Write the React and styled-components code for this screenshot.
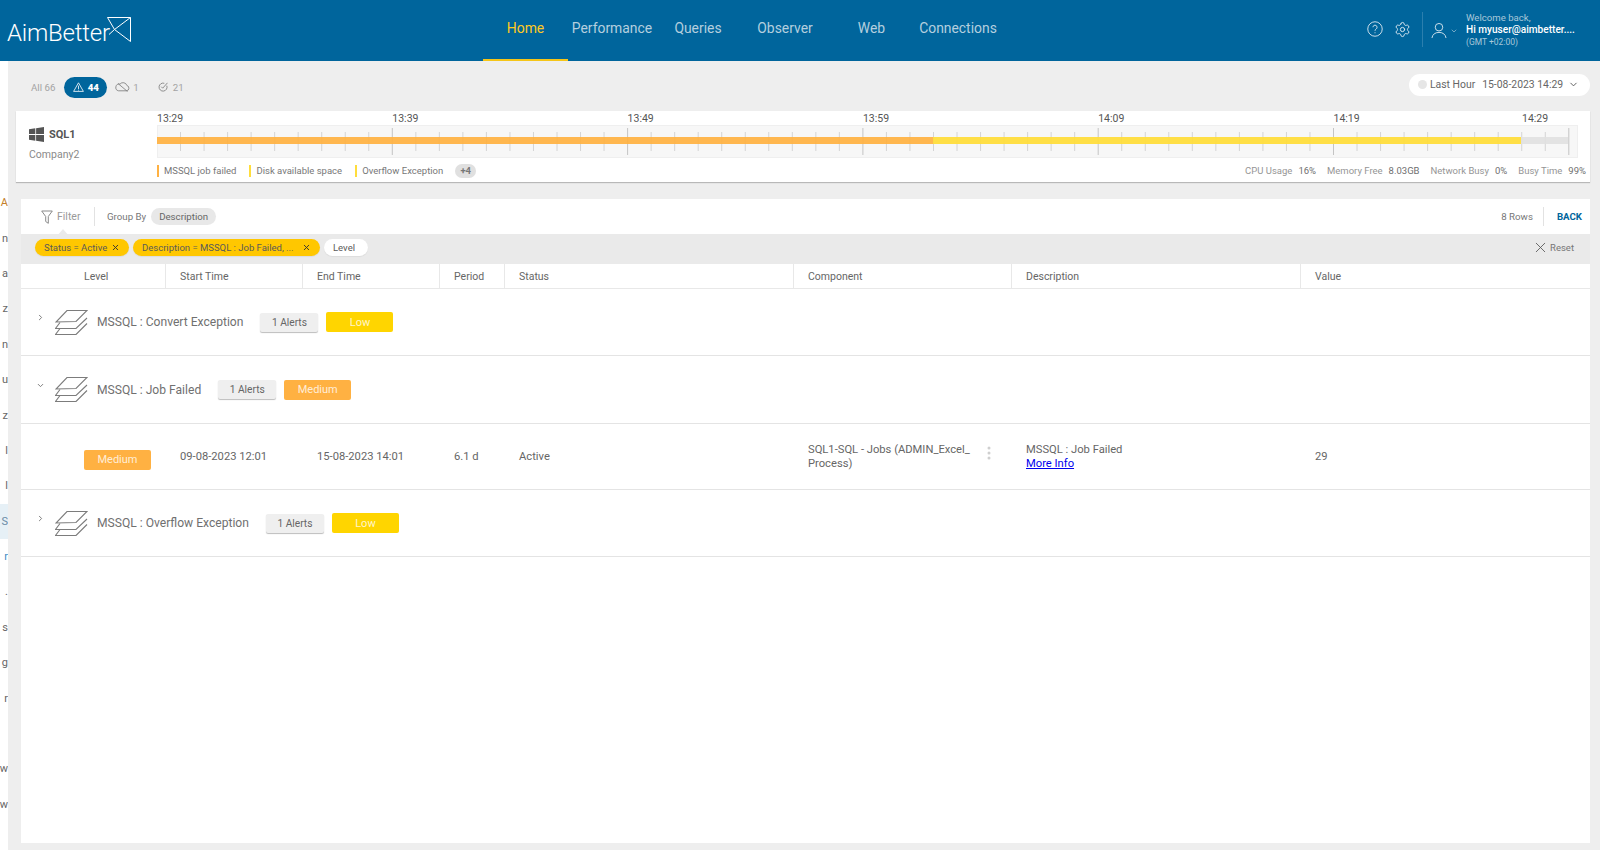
import React from 'react';
import styled, { createGlobalStyle } from 'styled-components';
import { ChevronDown, ChevronRight, Settings, X } from 'lucide-react';

const GlobalStyle = createGlobalStyle`
  html, body {
    margin: 0;
    padding: 0;
    height: 100%;
    background: #eeeeee;
    font-family: Roboto, "Liberation Sans", sans-serif;
  }
  * { box-sizing: border-box; }
`;

const Page = styled.div`
  width: 1600px;
  height: 850px;
  overflow: hidden;
  display: flex;
  flex-direction: column;
`;

const Header = styled.header`
  height: 61px;
  flex: none;
  background: #00659c;
  display: flex;
  align-items: stretch;
  color: #fff;
`;

const Logo = styled.div`
  width: 483px;
  padding: 17px 0 0 7px;
  display: flex;
  align-items: flex-start;
  font-size: 24px;
  font-weight: 300;
  letter-spacing: -0.2px;
  span { margin-top: 2px; line-height: 28px; }
  svg { margin-left: -3px; }
`;

const Nav = styled.nav`
  display: flex;
  flex: 1;
`;

const NavItem = styled.a`
  height: 61px;
  width: ${p => p.$w}px;
  display: flex;
  align-items: center;
  justify-content: center;
  padding-bottom: 4px;
  font-size: 13.9px;
  font-weight: 400;
  color: ${p => (p.$active ? '#ffc91f' : '#b4cfdf')};
  border-bottom: 2px solid ${p => (p.$active ? '#f5c518' : 'transparent')};
`;

const HeaderRight = styled.div`
  display: flex;
  align-items: center;
  width: 233px;
`;

const HeaderIcons = styled.div`
  display: flex;
  align-items: center;
  gap: 11px;
  width: 55px;
  padding-bottom: 3px;
`;

const VLine = styled.div`
  width: 1px;
  height: 35px;
  margin: 0 8px 2px 0;
  background: #2b7fae;
`;

const UserBox = styled.div`
  display: flex;
  align-items: center;
  gap: 3px;
  width: 35px;
`;

const Welcome = styled.div`
  display: flex;
  flex-direction: column;
  white-space: nowrap;
  line-height: 12px;
  margin-top: -1px;
`;

const WelcomeSmall = styled.span`
  font-size: ${p => p.$size}px;
  color: #a9c8da;
`;

const WelcomeName = styled.span`
  font-size: 10.1px;
  font-weight: 500;
  color: #fff;
`;

const Body = styled.div`
  flex: 1;
  display: flex;
  min-height: 0;
`;

const SideStrip = styled.aside`
  width: 8px;
  flex: none;
  background: #fff;
  overflow: hidden;
  display: flex;
  flex-direction: column;
  padding-top: 124px;
`;

const SideItem = styled.div`
  height: 35.4px;
  flex: none;
  display: flex;
  align-items: center;
  justify-content: flex-end;
  font-size: 11px;
  white-space: nowrap;
  color: ${p => p.$color || '#666'};
  background: ${p => p.$bg || 'transparent'};
`;

const Main = styled.main`
  flex: 1;
  min-width: 0;
  padding: 0 10px 7px 8px;
  display: flex;
  flex-direction: column;
`;

const TopBar = styled.div`
  height: 50px;
  flex: none;
  display: flex;
  align-items: center;
  justify-content: space-between;
  padding: 2px 0 0 15px;
`;

const Counters = styled.div`
  display: flex;
  align-items: center;
  font-size: 9.7px;
  color: #a3a3a3;
`;

const Counter = styled.div`
  display: flex;
  align-items: center;
  gap: ${p => p.$gap || 3}px;
  margin-right: ${p => p.$mr || 0}px;
`;

const ActiveCounter = styled.div`
  width: 43px;
  height: 21px;
  border-radius: 11px;
  background: #00659c;
  color: #fff;
  font-weight: 900;
  display: flex;
  align-items: center;
  justify-content: center;
  gap: 4px;
  margin-right: 8px;
`;

const DatePill = styled.div`
  width: 181px;
  height: 22px;
  margin-top: -5px;
  border-radius: 11px;
  background: #fff;
  display: flex;
  align-items: center;
  padding-left: 9px;
  font-size: 10.4px;
  color: #666;
  white-space: nowrap;
`;

const DateDot = styled.i`
  width: 9px;
  height: 9px;
  border-radius: 50%;
  background: #e6e6e6;
  margin-right: 3px;
`;

const DateValue = styled.span`
  margin-left: 7px;
  margin-right: 5px;
`;

const ServerCard = styled.section`
  height: 71px;
  flex: none;
  background: #fff;
  box-shadow: 0 1px 1px #b8b8b8;
  display: flex;
`;

const ServerInfo = styled.div`
  width: 141px;
  flex: none;
  padding: 16px 0 0 13px;
`;

const ServerName = styled.div`
  display: flex;
  align-items: center;
  gap: 5px;
  font-size: 11px;
  font-weight: 700;
  color: #555;
`;

const Company = styled.div`
  margin-top: 6px;
  font-size: 10.5px;
  color: #8a8a8a;
`;

const TimelineCol = styled.div`
  flex: 1;
  min-width: 0;
  padding-right: 12px;
`;

const TimeLabels = styled.div`
  height: 14px;
  display: flex;
  align-items: center;
  font-size: 10.5px;
  color: #555;
`;

const TimeLabel = styled.span`
  width: ${p => p.$w || 235.3}px;
  flex: none;
`;

const Legend = styled.div`
  display: flex;
  justify-content: space-between;
  align-items: center;
  height: 15px;
  margin-top: 5px;
  font-size: 9.5px;
  color: #777;
`;

const LegendLeft = styled.div`
  display: flex;
  align-items: center;
`;

const LegendItem = styled.span`
  border-left: 2px solid ${p => p.$color};
  padding-left: 5px;
  margin-right: 13px;
  line-height: 12px;
`;

const MoreBadge = styled.span`
  width: 21px;
  height: 14px;
  margin-left: -1px;
  border-radius: 7px;
  background: #e0e0e0;
  font-weight: 700;
  display: flex;
  align-items: center;
  justify-content: center;
`;

const Stats = styled.div`
  display: flex;
  gap: 11px;
  margin-right: -8px;
  font-size: 9.5px;
  color: #959595;
`;

const Stat = styled.span`
  display: flex;
  gap: 6px;
  span { color: #6f6f6f; }
`;

const Panel = styled.section`
  flex: 1;
  min-height: 0;
  margin: 17px 0 0 5px;
  background: #fff;
`;

const FilterRow = styled.div`
  height: 35px;
  display: flex;
  align-items: center;
  padding-left: 20px;
  font-size: 9.7px;
  color: #777;
`;

const FilterButton = styled.div`
  position: relative;
  height: 19px;
  width: 54px;
  display: flex;
  align-items: center;
  gap: 4px;
  font-size: 10.5px;
  color: #9a9a9a;
  border-right: 1px solid #e2e2e2;
  &::after {
    content: '';
    position: absolute;
    left: 16px;
    bottom: -10px;
    border-left: 6px solid transparent;
    border-right: 6px solid transparent;
    border-bottom: 7px solid #eaeaea;
  }
`;

const GroupLabel = styled.span`
  margin-left: 12px;
  margin-right: 5px;
`;

const GroupChip = styled.span`
  height: 17px;
  padding: 0 8px;
  border-radius: 9px;
  background: #e8e8e8;
  display: flex;
  align-items: center;
  color: #666;
`;

const FilterEnd = styled.div`
  margin-left: auto;
  display: flex;
  align-items: center;
  height: 19px;
`;

const BackLink = styled.a`
  margin-left: 10px;
  padding: 0 8px 0 13px;
  border-left: 1px solid #e2e2e2;
  line-height: 19px;
  font-weight: 700;
  color: #00659c;
`;

const ChipBar = styled.div`
  height: 30px;
  background: #eaeaea;
  display: flex;
  align-items: center;
  gap: 4px;
  padding: 0 16px 3px 14px;
  font-size: 9.5px;
`;

const Chip = styled.span`
  height: 17px;
  width: ${p => p.$w}px;
  padding: 0 9px 0 9px;
  border-radius: 9px;
  background: ${p => (p.$plain ? '#fff' : '#ffc700')};
  color: #5a5a5a;
  display: flex;
  align-items: center;
  justify-content: space-between;
  white-space: nowrap;
  box-shadow: 0 1px 1px rgba(0, 0, 0, 0.06);
`;

const ResetLink = styled.span`
  margin-left: auto;
  display: flex;
  align-items: center;
  gap: 1px;
  color: #777;
`;

const tableColumns = '145px 137px 137px 65px 289px 218px 289px 1fr';

const HeaderRow = styled.div`
  height: 25px;
  display: grid;
  grid-template-columns: ${tableColumns};
  border-bottom: 1px solid #e8e8e8;
  font-size: 10.5px;
  color: #666;
`;

const HeaderCell = styled.div`
  display: flex;
  align-items: center;
  padding-left: ${p => p.$pl || 14}px;
  border-right: ${p => (p.$last ? 'none' : '1px solid #e8e8e8')};
`;

const GroupRow = styled.div`
  height: ${p => p.$h}px;
  display: flex;
  align-items: center;
  padding-left: 15px;
  border-bottom: 1px solid #e4e4e4;
  font-size: 12.1px;
  color: #707070;
`;

const Caret = styled.span`
  width: 11px;
  height: 11px;
  margin-top: -7px;
  display: flex;
  color: #777;
`;

const GroupIcon = styled.svg`
  margin-left: 8px;
  margin-right: 9px;
  flex: none;
`;

const AlertsChip = styled.span`
  width: 58px;
  height: 19px;
  margin-left: 17px;
  background: #efefef;
  border-radius: 2px;
  box-shadow: 0 1px 1px #bdbdbd;
  display: flex;
  align-items: center;
  justify-content: center;
  font-size: 10.2px;
  color: #666;
`;

const LevelTag = styled.span`
  width: ${p => p.$w}px;
  height: 20px;
  margin-left: ${p => p.$ml || 0}px;
  margin-top: ${p => p.$mt || 0}px;
  border-radius: 2px;
  background: ${p => p.$color};
  color: rgba(255, 255, 255, 0.8);
  display: flex;
  align-items: center;
  justify-content: center;
  font-size: 11px;
`;

const DetailRow = styled.div`
  height: 66px;
  display: grid;
  grid-template-columns: ${tableColumns};
  border-bottom: 1px solid #e4e4e4;
  font-size: 11.2px;
  color: #666;
`;

const DetailCell = styled.div`
  display: flex;
  flex-direction: column;
  justify-content: center;
  padding-left: ${p => p.$pl || 14}px;
  line-height: 14px;
`;

const ComponentCell = styled(DetailCell)`
  position: relative;
  padding-right: 36px;
`;

const Kebab = styled.svg`
  position: absolute;
  right: 21px;
  top: 22px;
`;

const MoreInfo = styled.a`
  color: #0000ee;
  text-decoration: underline;
`;

function HelpIcon() {
  return (
    <svg width="16" height="16" viewBox="0 0 17 17" fill="none" stroke="#d5e4ee" strokeWidth="1">
      <circle cx="8.5" cy="8.5" r="7.7" />
      <path d="M6.3 6.6a2.2 2.2 0 1 1 3.4 1.9c-.8.5-1.2 1-1.2 1.9" />
      <path d="M8.5 12v1" />
    </svg>
  );
}

function UserIcon() {
  return (
    <svg width="16" height="17" viewBox="0 0 17 18" fill="none" stroke="#d5e4ee" strokeWidth="1">
      <circle cx="8.5" cy="5.5" r="4" />
      <path d="M1 17c.6-4 3.5-6 7.5-6s6.9 2 7.5 6" />
    </svg>
  );
}

function LogoMark() {
  return (
    <svg width="25" height="25" viewBox="0 0 25 25" fill="none" stroke="#fff" strokeWidth="1">
      <path d="M.5.5H23.5V24.5L7.5 12.5 23.5.5" />
      <path d="M.5.5L7.5 12.5 2 17.5" />
    </svg>
  );
}

function WindowsIcon() {
  return (
    <svg width="15" height="15" viewBox="0 0 15 15" fill="#555">
      <path d="M0 2.2l6.3-.9v5.800H0zM7.100 1.200L15 0v7.100H7.100zM0 7.900h6.300v5.800L0 12.800zM7.100 7.900H15V15l-7.900-1.200z" />
    </svg>
  );
}

function LayersIcon() {
  return (
    <GroupIcon width="33" height="25" viewBox="0 0 33 25" fill="none" stroke="#7c7c7c" strokeWidth="1.1">
      <path d="M12 .5h20L21 11.5 1 12z" />
      <path d="M5 12.5L.5 18.5H21L32 8" />
      <path d="M5 18.5L.5 24.5H21L32 13.5" />
    </GroupIcon>
  );
}

function FunnelIcon() {
  return (
    <svg width="12" height="14" viewBox="0 0 12 14" fill="none" stroke="#8a8a8a" strokeWidth="1">
      <path d="M.7 1h10.600L7.300 6.500v6.800L4.700 11.500v-5z" />
    </svg>
  );
}

function TimelineTrack() {
  const step = 23.53;
  const ticks = [];
  for (let i = 1; i <= 60; i++) ticks.push(i);
  return (
    <svg width="1421" height="33" viewBox="0 0 1421 33" style={{ display: 'block' }}>
      <rect x="0.5" y="0.5" width="1420" height="32" fill="#f7f7f7" stroke="#efefef" />
      {ticks.map(i => {
        const major = i % 10 === 0;
        const x = i * step;
        return (
          <line
            key={i}
            x1={x}
            x2={x}
            y1={major ? 3 : 7}
            y2={major ? 30 : 26}
            stroke={major ? '#c4c4c4' : '#d4d4d4'}
          />
        );
      })}
      <rect x="0" y="12" width="776" height="7" fill="#ffb142" fillOpacity="0.93" />
      <rect x="776" y="12" width="588" height="7" fill="#ffdd3c" fillOpacity="0.95" />
      <rect x="1364" y="12" width="47" height="7" fill="#e0e0e0" fillOpacity="0.9" />
    </svg>
  );
}

const sideItems = [
  ['A', '#c47f2a'], ['n'], ['a'], ['z'], ['n'], ['u'], ['z'], ['l'], ['l'],
  ['S', '#6a8ba5', '#e6f0f6'], ['r', '#3d8ec4'], ['.'], ['s'], ['g'], ['r'], [''], ['w'], ['w'],
];

const columns = ['Level', 'Start Time', 'End Time', 'Period', 'Status', 'Component', 'Description', 'Value'];

export default function App() {
  return (
    <Page>
      <GlobalStyle />
      <Header>
        <Logo>
          <span>AimBetter</span>
          <LogoMark />
        </Logo>
        <Nav>
          <NavItem $active $w={85}>Home</NavItem>
          <NavItem $w={88}>Performance</NavItem>
          <NavItem $w={84}>Queries</NavItem>
          <NavItem $w={90}>Observer</NavItem>
          <NavItem $w={83}>Web</NavItem>
          <NavItem $w={90}>Connections</NavItem>
        </Nav>
        <HeaderRight>
          <HeaderIcons>
            <HelpIcon />
            <Settings size={17} color="#d5e4ee" strokeWidth={1.4} />
          </HeaderIcons>
          <VLine />
          <UserBox>
            <UserIcon />
            <ChevronDown size={8} color="#a9c8da" />
          </UserBox>
          <Welcome>
            <WelcomeSmall $size={9.6}>Welcome back,</WelcomeSmall>
            <WelcomeName>Hi myuser@aimbetter....</WelcomeName>
            <WelcomeSmall $size={8.5}>(GMT +02:00)</WelcomeSmall>
          </Welcome>
        </HeaderRight>
      </Header>
      <Body>
        <SideStrip>
          {sideItems.map(([text, color, bg], i) => (
            <SideItem key={i} $color={color} $bg={bg}>{text}</SideItem>
          ))}
        </SideStrip>
        <Main>
          <TopBar>
            <Counters>
              <Counter $mr={9}>All 66</Counter>
              <ActiveCounter>
                <svg width="11" height="10" viewBox="0 0 11 10" fill="none" stroke="#fff" strokeWidth="0.8">
                  <path d="M5.5.8L10.4 9.4H.6z" />
                  <path d="M5.5 3.6v3.4M5.5 7.7v.8" />
                </svg>
                44
              </ActiveCounter>
              <Counter $mr={19}>
                <svg width="15" height="10" viewBox="0 0 15 10" fill="none" stroke="#777" strokeWidth="0.8">
                  <path d="M3.5 8.8H11.5a2.7 2.7 0 0 0 .4-5.3 4 4 0 0 0-6.9-1.4A3.3 3.3 0 0 0 3.5 8.8z" />
                  <path d="M3 1.5l9.5 8" />
                </svg>
                1
              </Counter>
              <Counter $gap={5}>
                <svg width="10" height="10" viewBox="0 0 10 10" fill="none" stroke="#777" strokeWidth="0.8">
                  <path d="M8.8 3.7A4 4 0 1 1 6.3 1.3" />
                  <path d="M3.2 4.7l1.5 1.5L9.5.8" />
                </svg>
                21
              </Counter>
            </Counters>
            <DatePill>
              <DateDot />
              Last Hour
              <DateValue>15-08-2023 14:29</DateValue>
              <ChevronDown size={11} color="#555" strokeWidth={2} />
            </DatePill>
          </TopBar>
          <ServerCard>
            <ServerInfo>
              <ServerName>
                <WindowsIcon />
                SQL1
              </ServerName>
              <Company>Company2</Company>
            </ServerInfo>
            <TimelineCol>
              <TimeLabels>
                <TimeLabel>13:29</TimeLabel>
                <TimeLabel>13:39</TimeLabel>
                <TimeLabel>13:49</TimeLabel>
                <TimeLabel>13:59</TimeLabel>
                <TimeLabel>14:09</TimeLabel>
                <TimeLabel $w={188.5}>14:19</TimeLabel>
                <TimeLabel $w={40}>14:29</TimeLabel>
              </TimeLabels>
              <TimelineTrack />
              <Legend>
                <LegendLeft>
                  <LegendItem $color="#ffb142">MSSQL job failed</LegendItem>
                  <LegendItem $color="#ffdd3c">Disk available space</LegendItem>
                  <LegendItem $color="#ffdd3c">Overflow Exception</LegendItem>
                  <MoreBadge>+4</MoreBadge>
                </LegendLeft>
                <Stats>
                  <Stat>CPU Usage <span>16%</span></Stat>
                  <Stat>Memory Free <span>8.03GB</span></Stat>
                  <Stat>Network Busy <span>0%</span></Stat>
                  <Stat>Busy Time <span>99%</span></Stat>
                </Stats>
              </Legend>
            </TimelineCol>
          </ServerCard>
          <Panel>
            <FilterRow>
              <FilterButton>
                <FunnelIcon />
                Filter
              </FilterButton>
              <GroupLabel>Group By</GroupLabel>
              <GroupChip>Description</GroupChip>
              <FilterEnd>
                8 Rows
                <BackLink>BACK</BackLink>
              </FilterEnd>
            </FilterRow>
            <ChipBar>
              <Chip $w={94}>Status = Active <X size={9} strokeWidth={2.5} color="#333" /></Chip>
              <Chip $w={187}>Description = MSSQL : Job Failed, ... <X size={9} strokeWidth={2.5} color="#333" /></Chip>
              <Chip $w={44} $plain>Level</Chip>
              <ResetLink><X size={17} strokeWidth={1.2} color="#555" /> Reset</ResetLink>
            </ChipBar>
            <HeaderRow>
              {columns.map((c, i) => (
                <HeaderCell key={c} $pl={i === 0 ? 63 : 14} $last={i === columns.length - 1}>{c}</HeaderCell>
              ))}
            </HeaderRow>
            <GroupRow $h={67}>
              <Caret><ChevronRight size={9} strokeWidth={2.5} /></Caret>
              <LayersIcon />
              MSSQL : Convert Exception
              <AlertsChip>1 Alerts</AlertsChip>
              <LevelTag $w={67} $ml={8} $color="#ffd500">Low</LevelTag>
            </GroupRow>
            <GroupRow $h={68}>
              <Caret><ChevronDown size={9} strokeWidth={2.5} /></Caret>
              <LayersIcon />
              MSSQL : Job Failed
              <AlertsChip>1 Alerts</AlertsChip>
              <LevelTag $w={67} $ml={8} $color="#ffb142">Medium</LevelTag>
            </GroupRow>
            <DetailRow>
              <DetailCell $pl={63}>
                <LevelTag $w={67} $mt={6} $color="#ffb142">Medium</LevelTag>
              </DetailCell>
              <DetailCell>09-08-2023 12:01</DetailCell>
              <DetailCell>15-08-2023 14:01</DetailCell>
              <DetailCell>6.1 d</DetailCell>
              <DetailCell>Active</DetailCell>
              <ComponentCell>
                SQL1-SQL - Jobs (ADMIN_Excel_ Process)
                <Kebab width="4" height="14" viewBox="0 0 4 14" fill="#cfcfcf">
                  <circle cx="2" cy="2" r="1.5" />
                  <circle cx="2" cy="7" r="1.5" />
                  <circle cx="2" cy="12" r="1.5" />
                </Kebab>
              </ComponentCell>
              <DetailCell>
                MSSQL : Job Failed
                <MoreInfo>More Info</MoreInfo>
              </DetailCell>
              <DetailCell>29</DetailCell>
            </DetailRow>
            <GroupRow $h={67}>
              <Caret><ChevronRight size={9} strokeWidth={2.5} /></Caret>
              <LayersIcon />
              MSSQL : Overflow Exception
              <AlertsChip>1 Alerts</AlertsChip>
              <LevelTag $w={67} $ml={8} $color="#ffd500">Low</LevelTag>
            </GroupRow>
          </Panel>
        </Main>
      </Body>
    </Page>
  );
}
